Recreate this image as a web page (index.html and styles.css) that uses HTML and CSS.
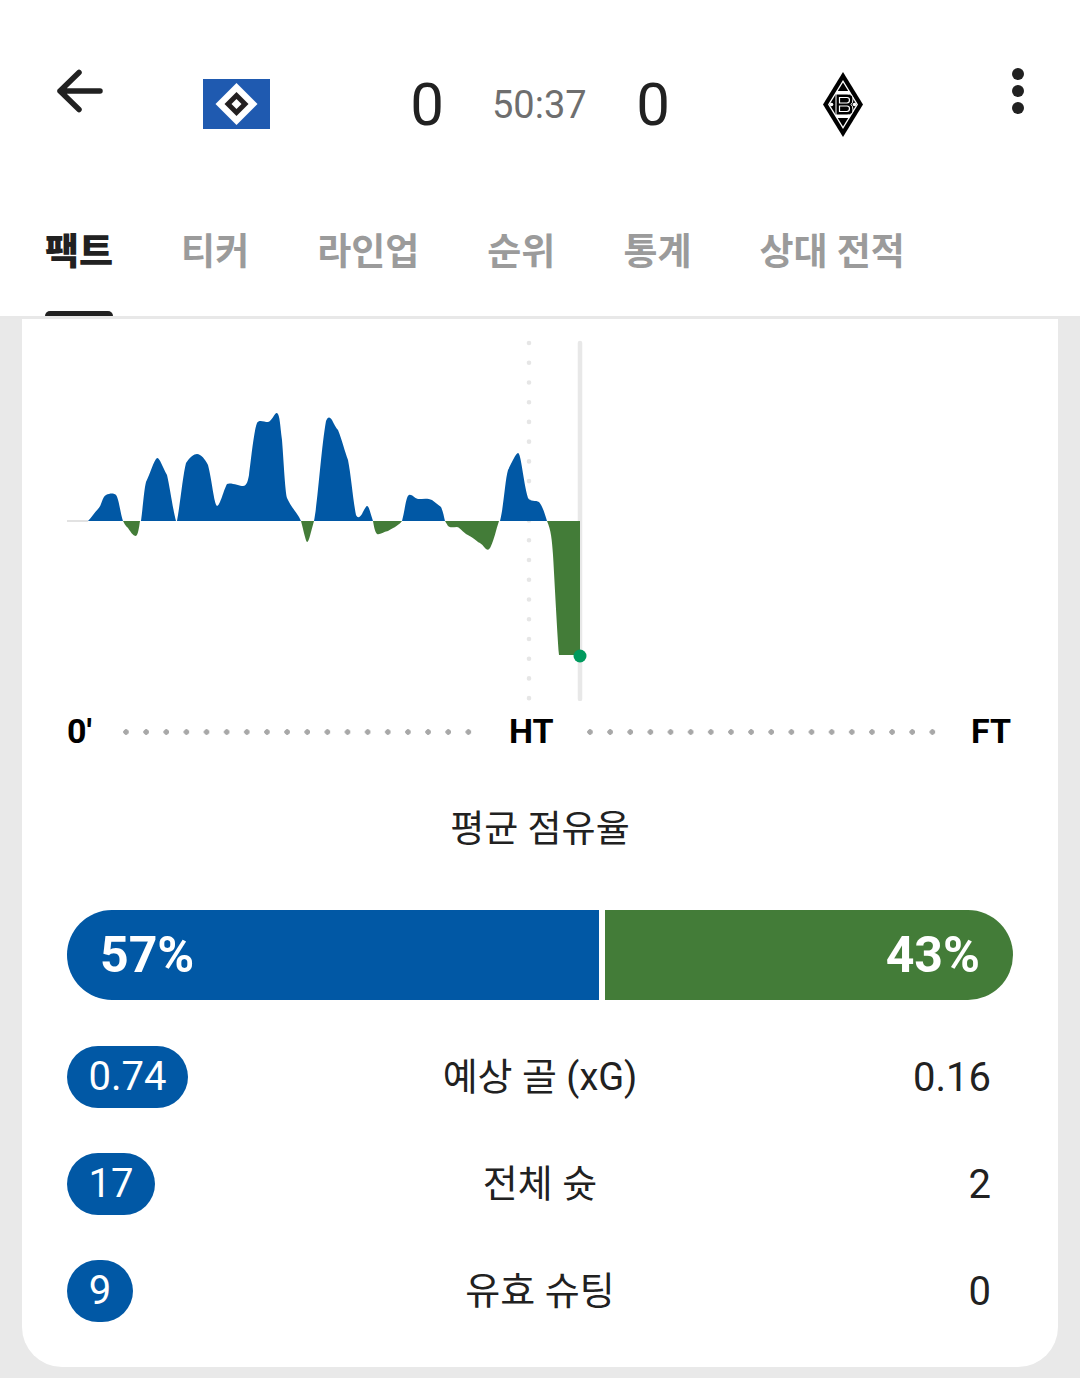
FILE: index.html
```html
<!DOCTYPE html>
<html lang="ko">
<head>
<meta charset="utf-8">
<title>팩트</title>
<link rel="stylesheet" href="styles.css">
</head>
<body>
<header class="top">
  <div class="score-row">
    <svg class="back" viewBox="0 0 48 44" width="48" height="44"><path d="M4 22H44M23 3.500 4 22 23 40.500" fill="none" stroke="#212121" stroke-width="5.500" stroke-linecap="round" stroke-linejoin="round"/></svg>
    <svg class="flag" viewBox="0 0 67 50" width="67" height="50"><rect width="67" height="50" fill="#1f5ab0"/><path d="M33.500 4 54.500 25 33.500 46 12.500 25Z" fill="#fff"/><path d="M33.500 13 45.500 25 33.500 37 21.500 25Z" fill="#231f20"/><path d="M33.500 20 38.500 25 33.500 30 28.500 25Z" fill="#fff"/></svg>
    <div class="score left">0</div>
    <div class="clock">50:37</div>
    <div class="score right">0</div>
    <svg class="crest" viewBox="0 0 40 65" width="40" height="65">
      <path d="M20 0 40 32.500 20 65 0 32.500Z" fill="#000"/>
      <path d="M20 8 35 32.500 20 57 5 32.500Z" fill="#fff"/>
      <path d="M20 10.500 33.500 32.500 20 54.500 6.500 32.500Z" fill="#000"/>
      <path d="M14 19H26L28 22H12ZM12 43H28L26 46H14Z" fill="#fff"/>
      <circle cx="8.500" cy="32.500" r="1.800" fill="#fff"/>
      <circle cx="31.500" cy="32.500" r="1.800" fill="#fff"/>
      <path d="M13 22H24Q30 22 30 27 30 31 28 32.500 30 34 30 38 30 43 24 43H13Z" fill="#000" stroke="#fff" stroke-width="1"/>
      <path d="M16.500 25.500H24Q26.500 25.500 26.500 28 26.500 31 24 31H16.500ZM16.500 34H24Q26.500 34 26.500 36.500 26.500 39.500 24 39.500H16.500Z" fill="none" stroke="#fff" stroke-width="1.200"/>
    </svg>
    <div class="menu"><i></i><i></i><i></i></div>
  </div>
  <nav class="tabs">
    <div class="tab active">팩트</div>
    <div class="tab">티커</div>
    <div class="tab">라인업</div>
    <div class="tab">순위</div>
    <div class="tab">통계</div>
    <div class="tab">상대 전적</div>
  </nav>
</header>
<main class="card">
  <svg class="chart" viewBox="67 340 946 361" width="946" height="361">
    <line x1="529" y1="343" x2="529" y2="699" stroke="#e6e6e6" stroke-width="4.600" stroke-linecap="round" stroke-dasharray="0 19.730"/>
    <line x1="580" y1="343" x2="580" y2="699" stroke="#e8e8e8" stroke-width="4.500" stroke-linecap="round"/>
    <line x1="67" y1="521" x2="88" y2="521" stroke="#d8d8d8" stroke-width="1.500"/>
    <path fill="#0158a5" d="M88 521C92 517 94 513 98 509 102 505 102 497 106 495 110 493 114 493 116 495 119 499 120 512 123 521ZM141 521C143 506 144 490 146 482 150 474 154 460 157 458 160 458 162 466 167 475 170 488 173 510 176 521ZM177 521C180 505 183 474 186 463 190 457 194 454 197 454 201 454 205 459 208 465 212 480 214 504 217 506 220 506 224 489 227 484 230 482 240 486 243 486 247 486 248 480 249 475 251 460 254 430 257 423 259 419 264 422 268 422 272 421 275 412 277 413 280 415 280 425 282 440 284 465 285 490 287 498 290 505 296 512 299 517L301 521ZM314 521C318 500 321 450 326 421 328 416 330 417 332 420 334 424 336 428 338 430 342 440 345 452 348 460 351 475 353 500 356 515 358 519 360 517 362 514 364 510 366 506 367 506 369 506 370 512 373 521ZM402 521C405 510 406 496 409 495 412 494 414 498 418 499 423 499 428 498 432 500 435 502 438 505 441 507 443 511 444 517 445 521ZM500 521C504 505 505 480 508 470 511 464 516 453 518 453 521 453 523 480 528 498 530 502 536 500 539 502 542 505 545 514 547 521Z"/>
    <path fill="#437c38" d="M123 521H140C139 528 138 535 136 536 133 536 130 531 128 528 126 526 125 525 123 521ZM301 521H314L311 532C309 540 308 542 307 542 306 542 304 533 301 521ZM373 521H402C399 525 395 527 388 531 383 532 380 535 377 534 375 532 374 527 373 521ZM445 521H499C496 530 494 540 491 546 489 551 487 550 485 548 482 544 480 543 478 542 472 537 468 535 466 534 461 530 459 527 457 527 453 527 450 528 448 526ZM547 521H580V655H559C557 630 554 570 553 555 552 540 551 530 547 521Z"/>
    <circle cx="580" cy="656" r="6.500" fill="#009a5e"/>
  </svg>
  <div class="axis">
    <span class="tick first">0'</span>
    <span class="dots"></span>
    <span class="tick mid">HT</span>
    <span class="dots"></span>
    <span class="tick last">FT</span>
  </div>
  <h2 class="poss-title">평균 점유율</h2>
  <div class="poss-bar">
    <div class="poss home">57%</div>
    <div class="poss away">43%</div>
  </div>
  <div class="stat">
    <div class="stat-l"><span class="pill">0.74</span></div>
    <div class="stat-name">예상 골 (xG)</div>
    <div class="stat-r">0.16</div>
  </div>
  <div class="stat">
    <div class="stat-l"><span class="pill">17</span></div>
    <div class="stat-name">전체 슛</div>
    <div class="stat-r">2</div>
  </div>
  <div class="stat">
    <div class="stat-l"><span class="pill round">9</span></div>
    <div class="stat-name">유효 슈팅</div>
    <div class="stat-r">0</div>
  </div>
</main>
</body>
</html>
```
FILE: styles.css
```css
* { box-sizing: border-box; }
html, body { margin: 0; padding: 0; }
body {
  width: 1080px;
  height: 1378px;
  overflow: hidden;
  background: #e9e9e9;
  font-family: Roboto, "Noto Sans CJK KR", sans-serif;
  color: #212121;
}
.top {
  height: 319px;
  background: #fff;
  border-bottom: 3px solid #e8e8e8;
  position: relative;
  z-index: 1;
}
.score-row {
  height: 204px;
  padding-top: 69px;
  display: flex;
  align-items: flex-start;
}
.back { margin-left: 56px; flex: none; }
.flag { margin: 10px 0 0 99px; flex: none; }
.score { font-size: 60px; line-height: 72px; flex: none; width: 36px; text-align: center; }
.left { margin-left: 139px; }
.clock { font-size: 38px; line-height: 72px; color: #6e6e6e; margin-left: 47px; width: 92px; text-align: center; flex: none; white-space: nowrap; }
.right { margin-left: 51px; }
.crest { margin: 3px 0 0 152px; flex: none; }
.menu {
  margin: -1px 0 0 149px;
  display: flex;
  flex-direction: column;
  gap: 5px;
  flex: none;
}
.menu i { display: block; width: 12px; height: 12px; border-radius: 50%; background: #212121; }
.tabs {
  display: flex;
  padding-left: 45px;
  gap: 68px;
  height: 112px;
}
.tab {
  font-size: 37px;
  font-weight: 700;
  line-height: 46px;
  height: 112px;
  padding-top: 26px;
  color: #9b9b9b;
  position: relative;
  white-space: nowrap;
}
.tab.active { color: #212121; font-weight: 900; }
.tab.active::after {
  content: "";
  position: absolute;
  left: 0;
  right: 0;
  bottom: 0;
  height: 5px;
  background: #212121;
  border-radius: 8px 8px 0 0;
}
.card {
  margin: 0 22px;
  height: 1048px;
  background: #fff;
  border-radius: 0 0 40px 40px;
  padding: 21px 45px 0;
}
.chart { display: block; }
.axis {
  display: flex;
  align-items: center;
  height: 60px;
  font-size: 34px;
  font-weight: 700;
}
.tick { line-height: 60px; flex: none; color: #000; }
.first { width: 56px; }
.mid { width: 44px; margin: 0 34px 0 36px; text-align: center; }
.last { width: 38px; margin-left: 34px; }
.dots {
  flex: none;
  width: 350px;
  height: 6px;
  margin-top: 2px;
  background-image: radial-gradient(circle at 3px 3px, #a8a8a8 2.500px, transparent 3px);
  background-size: 20.150px 6px;
  background-repeat: repeat-x;
}
.poss-title {
  margin: 0;
  padding-top: 42px;
  height: 149px;
  font-size: 37px;
  line-height: 54px;
  font-weight: 400;
  text-align: center;
  color: #212121;
}
.poss-bar { display: flex; gap: 6px; height: 90px; }
.poss {
  color: #fff;
  font-size: 50px;
  font-weight: 700;
  line-height: 90px;
}
.home { width: 532px; background: #0158a5; border-radius: 45px 0 0 45px; padding-left: 33px; }
.away { width: 408px; background: #437c38; border-radius: 0 45px 45px 0; padding-right: 33px; text-align: right; }
.stat {
  display: grid;
  grid-template-columns: minmax(0, 1fr) auto minmax(0, 1fr);
  align-items: center;
  height: 62px;
  margin-top: 45px;
  font-size: 40px;
}
.poss-bar + .stat { margin-top: 46px; }
.stat-l { display: flex; }
.stat-r { text-align: right; padding-right: 22px; color: #212121; }
.stat-name { font-size: 38px; line-height: 54px; color: #212121; }
.pill {
  display: block;
  height: 62px;
  line-height: 62px;
  padding: 0 21.500px;
  border-radius: 31px;
  background: #0158a5;
  color: #fff;
}
.pill.round { width: 66px; padding: 0; text-align: center; }
```
